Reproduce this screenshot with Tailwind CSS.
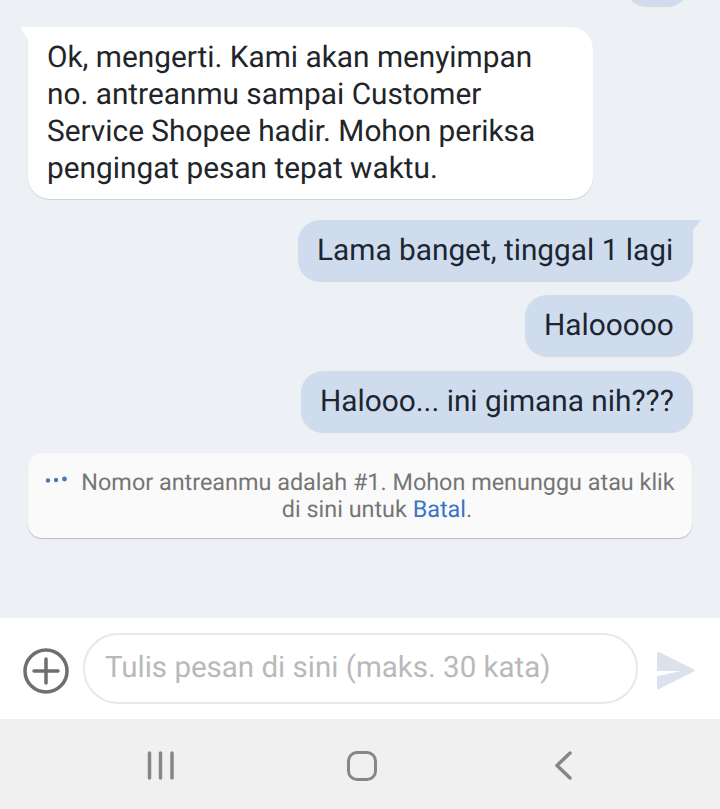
<!DOCTYPE html>
<html lang="en">
<head>
<meta charset="UTF-8">
<title>Chat</title>
<script src="https://cdn.jsdelivr.net/npm/@tailwindcss/browser@4"></script>
</head>
<body class="w-[720px] h-[809px] overflow-hidden bg-[#edf1f6] font-['Roboto',sans-serif] [text-rendering:geometricPrecision] flex flex-col">
  <!-- messages -->
  <div class="h-[618px] flex flex-col">
    <div class="h-[26px] mt-[-20px] w-[64px] ml-[625px] bg-[#cfdcee] rounded-b-[22px] shadow-[0_1px_1px_rgba(0,0,0,0.1)]"></div>

    <div class="relative mt-[21px] ml-[28px] w-[565px] h-[172px] bg-white rounded-[22px] rounded-tl-none shadow-[0_1px_1px_rgba(0,0,0,0.14)] pl-[19px] pt-[12px] text-[29.8px] leading-[37px] text-[#212529]">
      <svg class="absolute left-[-8px] top-0" width="9" height="14" viewBox="0 0 9 14"><path d="M9 0H2Q0 0 1.5 2L9 14Z" fill="#fff"/></svg>
      <p class="whitespace-nowrap">Ok, mengerti. Kami akan menyimpan</p>
      <p class="whitespace-nowrap">no. antreanmu sampai Customer</p>
      <p class="whitespace-nowrap">Service Shopee hadir. Mohon periksa</p>
      <p class="whitespace-nowrap">pengingat pesan tepat waktu.</p>
    </div>

    <div class="mt-[21px] pr-[27px] flex flex-col items-end text-[29.8px] leading-[37px] text-[#1c2530]">
      <div class="relative h-[61px] w-[395px] pl-[19px] pt-[12px] bg-[#cfdcee] rounded-[22px] rounded-tr-none shadow-[0_1px_1px_rgba(0,0,0,0.1)] whitespace-nowrap">
        Lama banget, tinggal 1 lagi
        <svg class="absolute right-[-8px] top-0" width="9" height="14" viewBox="0 0 9 14"><path d="M0 0H7Q9 0 7.5 2L0 11Z" fill="#cfdcee"/></svg>
      </div>
      <div class="mt-[14px] h-[61px] w-[168px] pl-[19px] pt-[12px] bg-[#cfdcee] rounded-[22px] shadow-[0_1px_1px_rgba(0,0,0,0.1)] whitespace-nowrap">Halooooo</div>
      <div class="mt-[15px] h-[61px] w-[392px] pl-[19px] pt-[12px] bg-[#cfdcee] rounded-[22px] shadow-[0_1px_1px_rgba(0,0,0,0.1)] whitespace-nowrap">Halooo... ini gimana nih???</div>
    </div>

    <div class="relative mt-[21px] ml-[28px] w-[664px] h-[85px] bg-[#fafafa] rounded-[14px] shadow-[0_1px_1px_rgba(0,0,0,0.22)] pt-[16px] text-center text-[23.4px] leading-[27px] text-[#757575]">
      <svg class="absolute left-[16px] top-[22px]" width="24" height="10" viewBox="0 0 24 10" fill="#4a79b4"><circle cx="4" cy="5.5" r="2.2"/><circle cx="12" cy="5" r="2.2"/><circle cx="20.500" cy="4" r="2.4"/></svg>
      <p class="pl-[40px] pr-[4px] whitespace-nowrap">Nomor antreanmu adalah #1. Mohon menunggu atau klik</p>
      <p class="whitespace-nowrap pl-[34px]">di sini untuk <span class="text-[#3a75c4]">Batal</span>.</p>
    </div>
  </div>

  <!-- input bar -->
  <div class="h-[101px] bg-white flex items-center">
    <svg class="ml-[23px] mt-[4px]" width="46" height="46" viewBox="0 0 46 46" fill="none" stroke="#6f6f6f" stroke-linecap="round">
      <circle cx="23" cy="23" r="21" stroke-width="3.500"/>
      <path d="M23 11V35M11 23H35" stroke-width="3.500"/>
    </svg>
    <div class="ml-[14px] w-[555px] h-[71px] rounded-[35px] border-2 border-[#e8e8e8] pl-[20px] flex items-center text-[29.5px] text-[#b9b9b9] whitespace-nowrap">Tulis pesan di sini (maks. 30 kata)</div>
    <svg class="ml-[18px] mt-[4px]" width="40" height="40" viewBox="0 0 40 40"><path d="M3 1L38 18.500Q39.500 19.500 38 20.500L3 38Q1 39 1 36.500V25L25 20L1 20V3Q1 0.500 3 1Z" fill="#dbe2ed"/></svg>
  </div>

  <!-- android nav -->
  <div class="flex-1 bg-[#f0f0f0] relative">
    <svg class="absolute left-[145px] top-[31px]" width="30" height="30" viewBox="0 0 30 30" fill="none" stroke="#868686" stroke-width="3.500" stroke-linecap="round">
      <path d="M4.500 3V28M15.500 3V28M27 3V28"/>
    </svg>
    <div class="absolute left-[347px] top-[32px] w-[30px] h-[30px] rounded-[10px] border-[3.500px] border-[#868686]"></div>
    <svg class="absolute left-[553px] top-[31px]" width="20" height="30" viewBox="0 0 20 30" fill="none" stroke="#868686" stroke-width="3.500" stroke-linecap="round" stroke-linejoin="round">
      <path d="M17 3L4 15.500L17 28"/>
    </svg>
  </div>
</body>
</html>
